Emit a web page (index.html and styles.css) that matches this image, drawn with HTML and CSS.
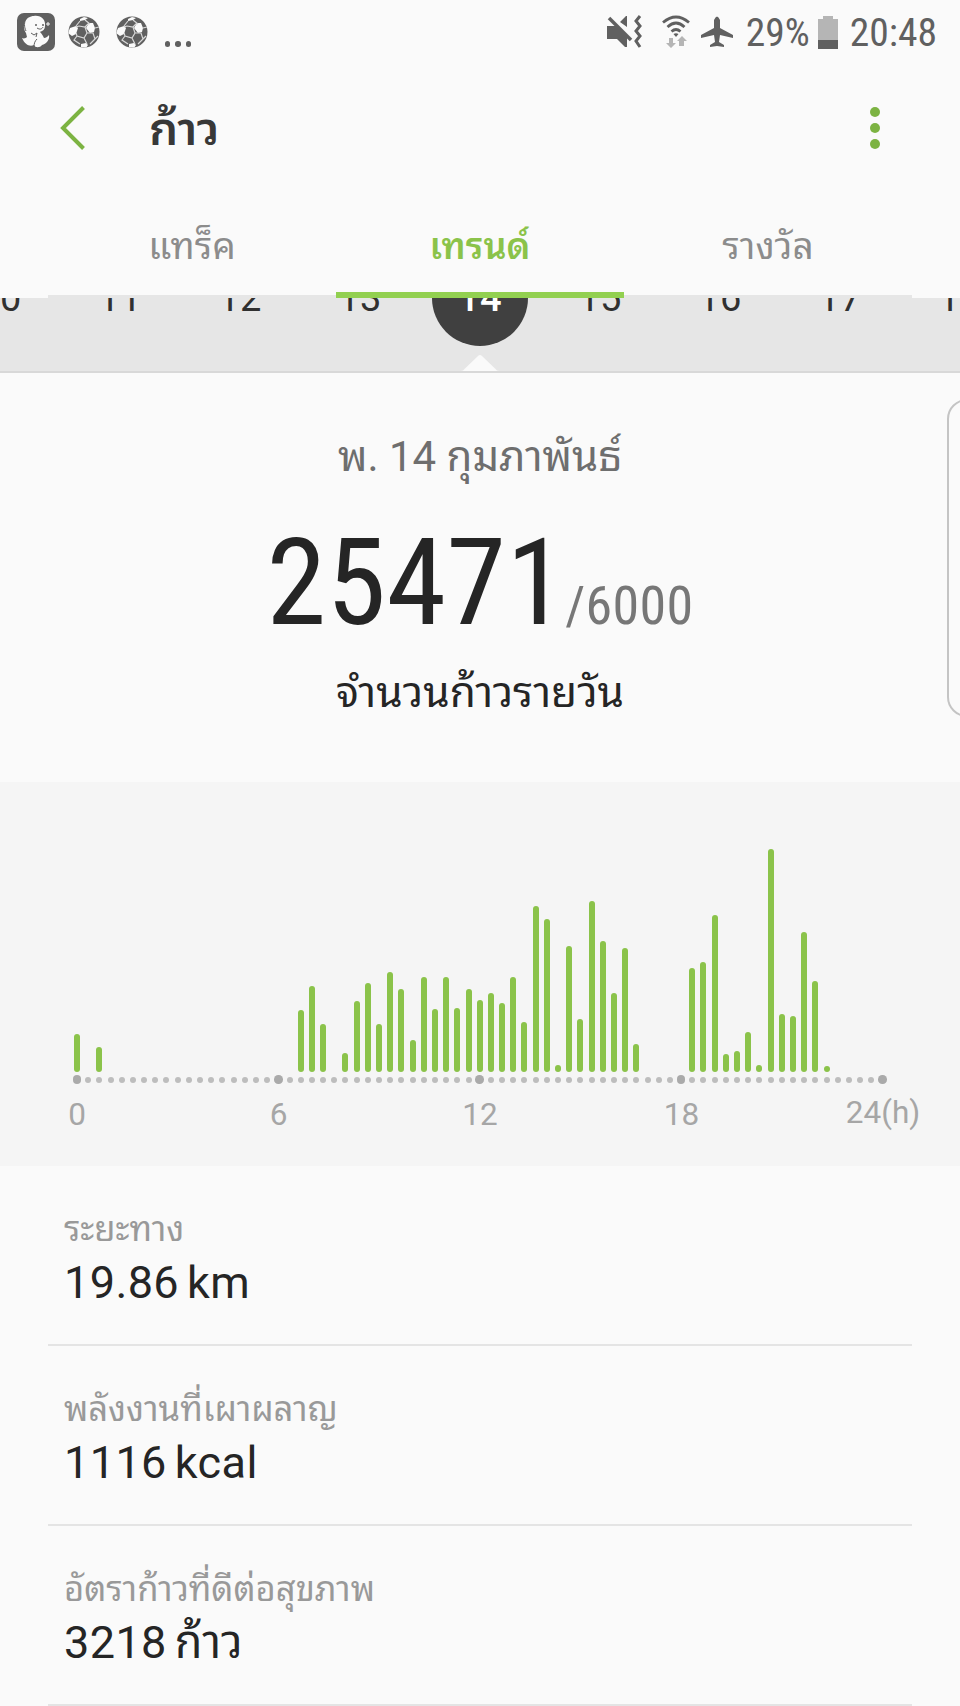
FILE: index.html
```html
<!DOCTYPE html>
<html lang="th">
<head>
  <meta charset="UTF-8" />
  <meta name="viewport" content="width=device-width, initial-scale=1.0" />
  <title>ก้าว</title>
  <link rel="stylesheet" href="styles.css">
</head>
<body>

  <div class="status-bar">
    <div class="notifications">
      <svg class="app-icon" width="38" height="38" viewBox="0 0 38 38">
        <rect width="38" height="38" rx="7" fill="#606060"/>
        <path d="M9 20C4 12 9 3 17 3c7-1 12 4 11 10 0 4-3 5-5 6 2 2 3 4 4 6 2 0 4-2 5-3 1 5-3 9-7 10-2 3-7 3-8 0-4 2-9 0-12-7 2 1 4 0 5-1z" fill="#fafafa"/>
        <path d="M20 15c3 2 5 1 6-1M14 20l3 2 3-2-1 4M17 34c0-4 1-6 3-8M9 6c-2 3-2 8 0 12" fill="none" stroke="#606060" stroke-width="1"/>
        <circle cx="19" cy="12" r="1" fill="#606060"/>
        <circle cx="26" cy="12" r="1" fill="#606060"/>
        <path d="M31 9v4M29 11h4" stroke="#fafafa" stroke-width="1"/>
      </svg>
      <svg class="ball" width="32" height="32" viewBox="0 0 32 32"><use href="#ball"/></svg>
      <svg class="ball" width="32" height="32" viewBox="0 0 32 32"><use href="#ball"/></svg>
      <span class="more-dots"><i></i><i></i><i></i></span>
    </div>
    <div class="system">
      <svg class="mute" width="35" height="34" viewBox="0 0 35 34">
        <path d="M0 11h9l11 11v10h-2l-8-8H0zM13 7l6-6h1v11z" fill="#606060"/>
        <path d="M2 3l22 22" stroke="#606060" stroke-width="3.500"/>
        <path d="M33 1l-4 5 4 5-4 5 4 5-4 5 4 6" fill="none" stroke="#606060" stroke-width="3"/>
      </svg>
      <svg class="wifi" width="28" height="34" viewBox="0 0 28 34">
        <path d="M1 7.500q13-11 26 0M5.500 12q8.500-8 17 0M9.500 16.500q4.500-4 9 0" fill="none" stroke="#606060" stroke-width="2.800"/>
        <path d="M11.500 19q2.500-1.500 5 0L14 22z" fill="#606060"/>
        <path d="M7 23h4v5h3l-5 5-5-5h3zM17 31h5v-5h3l-5-5-5 5h2z" fill="#b5b5b5"/>
      </svg>
      <svg class="plane" width="34" height="32" viewBox="0 0 34 32">
        <path d="M14 4q3-7 6 0v8l13 7v3l-13-3-1 7 5 3v2l-7-1-7 1v-2l5-3-1-7-13 3v-3l13-7z" fill="#606060"/>
      </svg>
      <span class="battery-text">29%</span>
      <svg class="battery" width="20" height="33" viewBox="0 0 20 33">
        <path d="M5 0h10v3h5v21H0V3h5z" fill="#b5b5b5"/>
        <rect y="24" width="20" height="9" fill="#606060"/>
      </svg>
      <span class="clock">20:48</span>
    </div>
  </div>

  <div class="app-bar">
    <svg class="back" width="26" height="44" viewBox="0 0 26 44">
      <path d="M23.500 1.500L3 22l20.500 20.500" fill="none" stroke="#7cb342" stroke-width="4"/>
    </svg>
    <h1>ก้าว</h1>
    <div class="menu"><i></i><i></i><i></i></div>
  </div>

  <div class="tabs">
    <div class="tab">แทร็ค</div>
    <div class="tab active">เทรนด์</div>
    <div class="tab">รางวัล</div>
  </div>

  <div class="date-strip">
    <div class="dates">
      <span>10</span>
      <span>11</span>
      <span>12</span>
      <span>13</span>
      <span class="selected">14</span>
      <span>15</span>
      <span>16</span>
      <span>17</span>
      <span>18</span>
    </div>
    <svg class="pointer" width="38" height="19" viewBox="0 0 38 19">
      <path d="M0 17Q2 17 4 14.500L17 2q2-2 4 0l13 12.500q2 2.500 4 2.500v2H0z" fill="#fafafa"/>
    </svg>
  </div>

  <div class="summary">
    <p class="day">พ. 14 กุมภาพันธ์</p>
    <p class="steps"><span class="count">25471</span><span class="goal">/6000</span></p>
    <p class="caption">จำนวนก้าวรายวัน</p>
    <div class="edge-handle"></div>
  </div>

  <div class="chart">
    <div class="bars" id="bars"></div>
    <div class="axis" id="axis"></div>
    <div class="labels">
      <span>0</span>
      <span>6</span>
      <span>12</span>
      <span>18</span>
      <span class="last">24(h)</span>
    </div>
  </div>

  <div class="stats">
    <div class="stat">
      <p class="label">ระยะทาง</p>
      <p class="value">19.86 km</p>
    </div>
    <div class="stat">
      <p class="label">พลังงานที่เผาผลาญ</p>
      <p class="value">1116 kcal</p>
    </div>
    <div class="stat">
      <p class="label">อัตราก้าวที่ดีต่อสุขภาพ</p>
      <p class="value">3218 ก้าว</p>
    </div>
  </div>

  <svg class="defs" width="0" height="0">
    <defs>
      <clipPath id="ballClip"><circle cx="16" cy="16" r="15.500"/></clipPath>
      <g id="ball">
        <circle cx="16" cy="16" r="15.500" fill="#606060"/>
        <g clip-path="url(#ballClip)">
          <path d="M2 12l6-2 2 2-2 6-4 2-4-3zM21 7l4 0 2 5-1 4-4 1-4-5zM12 3l4-2 4 1-3 2-5 1zM13 28l5-1 2 2-2 3-5-1z" fill="#fafafa"/>
          <path d="M8 11l3-1 6 1 4-4M17 11l2 6-3 5-7-2-1-3M16 22l3 6M19 17l6 0 2 6-5 5M9 20l-3 4 6 4M12 5L8 10M27 12l4-1M27 23l3-3M17 4l5 4" fill="none" stroke="#d8d8d8" stroke-width="1.200"/>
        </g>
      </g>
    </defs>
  </svg>

  <script>
    // one bar for every 20 minutes: slot index -> height in px
    const steps = {
      0: 37.5, 2: 24.5, 20: 62, 21: 85.5, 22: 47.5, 24: 18.5, 25: 70.5, 26: 88.5,
      27: 47.5, 28: 100, 29: 83, 30: 32, 31: 95, 32: 63, 33: 95, 34: 64, 35: 82.5,
      36: 71.5, 37: 78.5, 38: 69, 39: 94.5, 40: 49.5, 41: 165.5, 42: 153, 43: 6.5,
      44: 126, 45: 53, 46: 171, 47: 131, 48: 78.5, 49: 124, 50: 27.5, 55: 104,
      56: 110, 57: 157, 58: 17.5, 59: 20.5, 60: 40, 61: 6.5, 62: 222.5, 63: 57.5,
      64: 56, 65: 140, 66: 90.5, 67: 5.5
    };
    const bars = document.getElementById('bars');
    const axis = document.getElementById('axis');

    for (let i = 0; i <= 72; i++) {
      const slot = document.createElement('div');
      slot.className = 'slot';
      if (steps[i]) {
        const bar = document.createElement('div');
        bar.className = 'bar';
        bar.style.height = steps[i] + 'px';
        slot.appendChild(bar);
      }
      bars.appendChild(slot);

      const tick = document.createElement('div');
      tick.className = 'slot';
      const dot = document.createElement('i');
      dot.className = i % 18 === 0 ? 'dot big' : 'dot';
      tick.appendChild(dot);
      axis.appendChild(tick);
    }
  </script>

</body>
</html>
```
FILE: styles.css
```css
* {
  box-sizing: border-box;
}

body {
  margin: 0;
  width: 960px;
  height: 1706px;
  overflow: hidden;
  background: #fafafa;
  color: #252525;
  font-family: Roboto, "Noto Sans Thai Looped", "Noto Sans Thai", "Noto Sans", sans-serif;
}

p,
h1 {
  margin: 0;
  white-space: nowrap;
}

svg {
  display: block;
  flex: none;
}

.defs {
  position: absolute;
}

/* status bar */
.status-bar {
  display: flex;
  justify-content: space-between;
  height: 66px;
  padding: 0 23px 0 17px;
}

.notifications,
.system {
  display: flex;
  align-items: center;
  height: 64px;
}

.ball {
  margin-left: 12.500px;
}

.ball + .ball {
  margin-left: 16px;
}

.more-dots {
  display: flex;
  gap: 5px;
  margin: 24px 0 0 17px;
}

.more-dots i {
  width: 5.500px;
  height: 5.500px;
  border-radius: 50%;
  background: #606060;
}

.battery-text,
.clock {
  padding-top: 2px;
  font-family: "Roboto Condensed", Roboto, sans-serif;
  font-stretch: 75%;
  font-size: 39.500px;
  line-height: 64px;
  color: #606060;
}

.wifi {
  margin-left: 20px;
}

.plane {
  margin: 0 12px 0 10px;
}

.battery {
  margin: 0 12px 0 8px;
}

/* title row */
.app-bar {
  display: flex;
  align-items: center;
  height: 124px;
  padding: 0 80px 0 60px;
}

.app-bar h1 {
  flex: 1;
  margin-left: 63px;
  padding-top: 2px;
  font-size: 46px;
  line-height: 122px;
  font-weight: 600;
  color: #383838;
}

.menu {
  display: flex;
  flex-direction: column;
  gap: 6px;
}

.menu i {
  width: 10px;
  height: 10px;
  border-radius: 50%;
  background: #7cb342;
}

/* tabs */
.tabs {
  display: flex;
  height: 108px;
  margin: 0 48px;
  border-bottom: 3px solid #e6e6e6;
}

.tab {
  flex: 1;
  height: 108px;
  font-size: 37px;
  line-height: 114px;
  text-align: center;
  color: #8c8c8c;
}

.tab.active {
  color: #8bc34a;
  font-size: 36px;
  font-weight: 600;
  border-bottom: 6px solid #92d050;
}

/* date strip */
.date-strip {
  position: relative;
  height: 75px;
  overflow: hidden;
  background: #e6e6e6;
  border-bottom: 2px solid #d8d8d8;
}

.dates {
  display: flex;
  justify-content: center;
  margin: -48px -60px 0;
}

.dates span {
  flex: none;
  width: 96px;
  height: 96px;
  margin: 0 12px;
  border-radius: 50%;
  font-size: 38px;
  line-height: 97px;
  letter-spacing: 0.300px;
  text-align: center;
  color: #303030;
}

.dates .selected {
  background: #404040;
  color: #fff;
  font-weight: 500;
}

.pointer {
  position: absolute;
  left: 461px;
  bottom: -2px;
}

/* day summary */
.summary {
  position: relative;
  height: 409px;
  overflow: hidden;
  text-align: center;
}

.day {
  padding-top: 44px;
  font-size: 42px;
  line-height: 80px;
  color: #6e6e6e;
}

.steps {
  display: flex;
  justify-content: center;
  align-items: baseline;
  height: 140px;
  margin-top: 16px;
  font-family: "Roboto Condensed", Roboto, sans-serif;
  font-stretch: 75%;
  line-height: 140px;
}

.count {
  font-size: 121px;
  letter-spacing: 0.200px;
}

.goal {
  margin-left: -1px;
  font-size: 54px;
  letter-spacing: 0.300px;
  color: #777;
}

.caption {
  font-size: 42.500px;
  line-height: 79px;
}

.edge-handle {
  position: absolute;
  top: 26px;
  left: 947px;
  width: 40px;
  height: 318px;
  border: 2px solid #c4c4c4;
  border-radius: 20px;
}

/* hourly chart */
.chart {
  height: 384px;
  padding: 0 72px 0 71.400px;
  background: #f5f5f5;
}

.bars,
.axis {
  display: flex;
}

.bars {
  align-items: flex-end;
  height: 289.500px;
}

.axis {
  align-items: center;
  height: 16px;
}

.slot {
  display: flex;
  flex: 1;
  justify-content: center;
}

.bar {
  width: 6px;
  flex: none;
  border-radius: 3px;
  background: #8bc34a;
}

.dot {
  flex: none;
  width: 6px;
  height: 6px;
  border-radius: 50%;
  background: #bdbdbd;
}

.dot.big {
  width: 8.500px;
  height: 8.500px;
  background: #aaa;
}

.labels {
  display: flex;
  justify-content: space-between;
  margin: 7.500px -45px 0 -44.400px;
}

.labels span {
  width: 100px;
  font-size: 31.500px;
  line-height: 40px;
  text-align: center;
  color: #a6a6a6;
}

.labels .last {
  margin-top: -2px;
}

/* totals */
.stats {
  margin: 0 48px;
}

.stat {
  height: 180px;
  padding: 36px 16px 0;
  border-bottom: 2px solid #e4e4e4;
}

.label {
  font-size: 34.600px;
  line-height: 54px;
  color: #999;
}

.value {
  font-size: 45px;
  line-height: 54px;
  letter-spacing: 0.400px;
  word-spacing: -3.500px;
}
```
